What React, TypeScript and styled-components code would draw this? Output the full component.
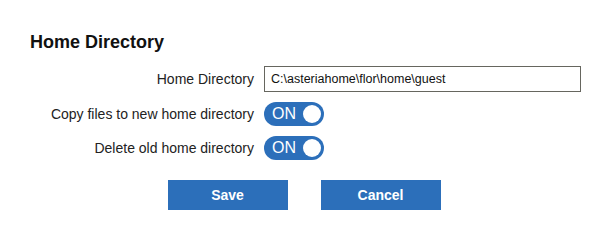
import React from "react";
import styled, { createGlobalStyle } from "styled-components";

const Global = createGlobalStyle`
  html, body { margin: 0; padding: 0; background: #fff; }
  body { font-family: "Liberation Sans", Arial, sans-serif; color: #222; }
`;

const BLUE = "#2c6fba";

const Page = styled.div`
  width: 609px;
  height: 241px;
  box-sizing: border-box;
  padding: 32px 0 0 30px;
`;

const Title = styled.h2`
  margin: 0;
  font-size: 18px;
  line-height: 21px;
  font-weight: bold;
  color: #111;
`;

const Form = styled.div`
  display: grid;
  grid-template-columns: 224px auto;
  column-gap: 10px;
  row-gap: 10px;
  align-items: center;
  margin-top: 13px;
`;

const Label = styled.label`
  text-align: right;
  font-size: 14px;
  color: #222;
`;

const Input = styled.input`
  box-sizing: border-box;
  width: 317px;
  height: 26px;
  border: 1px solid #66665f;
  border-radius: 0;
  padding: 0 6px;
  font-family: "Liberation Sans", Arial, sans-serif;
  font-size: 12.5px;
  color: #111;
  outline: none;
`;

const Toggle = styled.button<{ $on: boolean }>`
  position: relative;
  box-sizing: border-box;
  width: 60px;
  height: 24px;
  border: none;
  border-radius: 12px;
  background: ${(p) => (p.$on ? BLUE : "#bbb")};
  padding: 0 0 0 8px;
  display: flex;
  align-items: center;
  color: #fff;
  font-family: "Liberation Sans", Arial, sans-serif;
  font-size: 16px;
  cursor: pointer;
`;

const Knob = styled.span`
  position: absolute;
  right: 3px;
  top: 3px;
  width: 18px;
  height: 18px;
  border-radius: 50%;
  background: #fff;
`;

const Buttons = styled.div`
  display: flex;
  justify-content: center;
  gap: 33px;
  margin: 20px 0 0 -31px;
`;

const Button = styled.button`
  width: 120px;
  height: 30px;
  border: none;
  background: ${BLUE};
  color: #fff;
  font-family: "Liberation Sans", Arial, sans-serif;
  font-weight: bold;
  font-size: 14px;
  cursor: pointer;
`;

export default function App() {
  return (
    <>
      <Global />
      <Page>
        <Title>Home Directory</Title>
        <Form>
          <Label>Home Directory</Label>
          <Input defaultValue={"C:\\asteriahome\\flor\\home\\guest"} />
          <Label>Copy files to new home directory</Label>
          <div>
            <Toggle $on>
              ON
              <Knob />
            </Toggle>
          </div>
          <Label>Delete old home directory</Label>
          <div>
            <Toggle $on>
              ON
              <Knob />
            </Toggle>
          </div>
        </Form>
        <Buttons>
          <Button>Save</Button>
          <Button>Cancel</Button>
        </Buttons>
      </Page>
    </>
  );
}
